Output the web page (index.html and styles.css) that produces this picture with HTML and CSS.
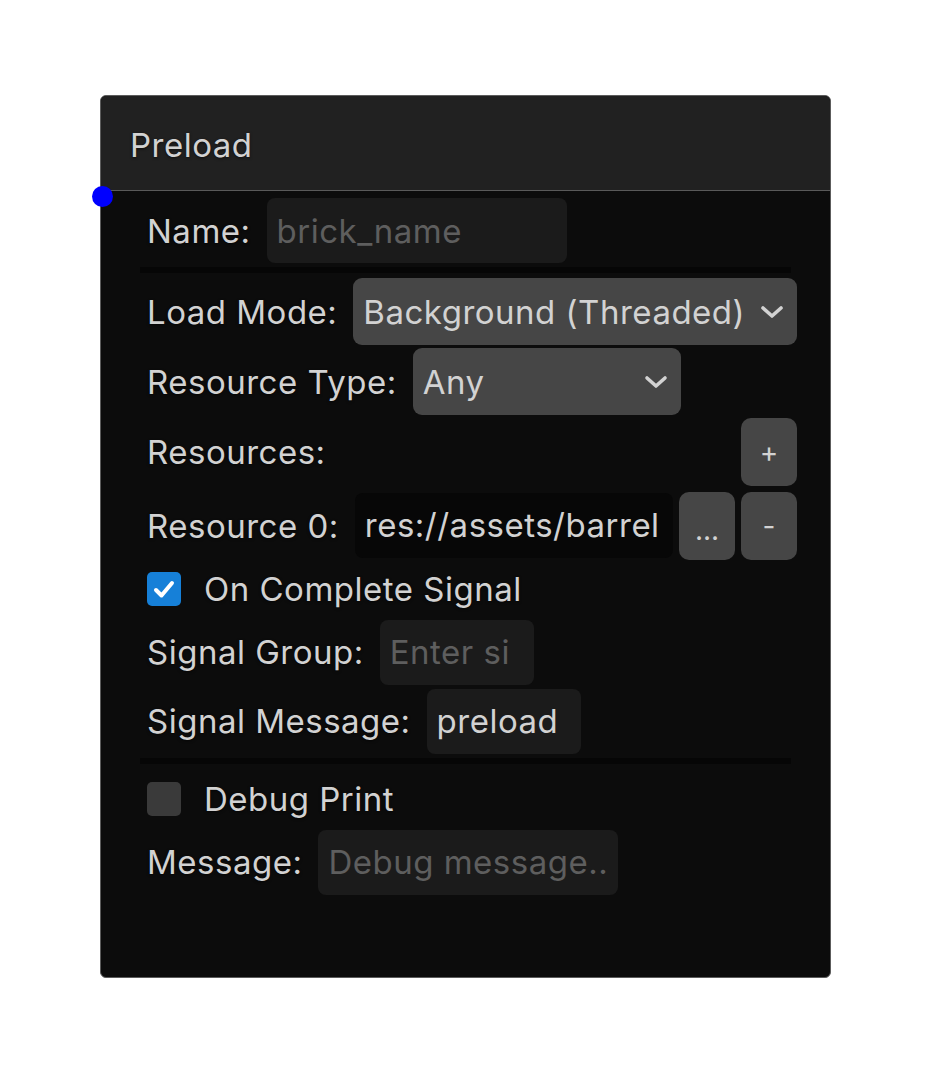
FILE: index.html
```html
<!DOCTYPE html>
<html>

<head>
    <meta charset="UTF-8">
    <title>Preload</title>
    <link rel="stylesheet" href="styles.css">
</head>

<body>
    <div class="node">
        <span class="port"></span>
        <div class="node-title">Preload</div>

        <div class="node-body">
            <div class="row row-name">
                <label for="name">Name:</label>
                <input type="text" id="name" class="field field-name" placeholder="brick_name">
            </div>

            <div class="sep"></div>

            <div class="row row-tall">
                <label>Load Mode:</label>
                <button class="dropdown dropdown-mode">
                    <span>Background (Threaded)</span>
                    <svg width="26" height="16" viewBox="0 0 26 16"><polyline points="4,4 13,12 22,4" /></svg>
                </button>
            </div>

            <div class="row row-tall">
                <label>Resource Type:</label>
                <button class="dropdown dropdown-type">
                    <span>Any</span>
                    <svg width="26" height="16" viewBox="0 0 26 16"><polyline points="4,4 13,12 22,4" /></svg>
                </button>
            </div>

            <div class="row row-tall row-resources">
                <label>Resources:</label>
                <button class="btn btn-add">+</button>
            </div>

            <div class="row row-tall">
                <label>Resource 0:</label>
                <div class="path">res://assets/barrel</div>
                <button class="btn btn-browse">...</button>
                <button class="btn">-</button>
            </div>

            <div class="row row-check">
                <span class="check checked">
                    <svg width="34" height="34" viewBox="0 0 34 34"><polyline points="9,18 14.5,23.5 25,11" /></svg>
                </span>
                <span class="check-label">On Complete Signal</span>
            </div>

            <div class="row">
                <label for="group">Signal Group:</label>
                <input type="text" id="group" class="field field-short" placeholder="Enter si">
            </div>

            <div class="row">
                <label for="msg">Signal Message:</label>
                <input type="text" id="msg" class="field field-short" value="preload">
            </div>

            <div class="sep sep-debug"></div>

            <div class="row row-check">
                <span class="check"></span>
                <span class="check-label">Debug Print</span>
            </div>

            <div class="row">
                <label for="debug">Message:</label>
                <input type="text" id="debug" class="field field-name" placeholder="Debug message..">
            </div>
        </div>
    </div>
</body>

</html>
```

FILE: styles.css
```css
* {
    box-sizing: border-box;
    margin: 0;
    padding: 0;
}

body {
    background-color: #fff;
    font-family: Inter, "Noto Sans", sans-serif;
    font-size: 33px;
    letter-spacing: 0.5px;
    color: #d2d2d2;
}

.node {
    position: relative;
    width: 731px;
    height: 883px;
    margin: 95px 0 0 100px;
    background-color: #0c0c0c;
    border: 1px solid #5c5c5c;
    border-radius: 6px;
}

.port {
    position: absolute;
    left: -9px;
    top: 90px;
    width: 21px;
    height: 21px;
    border-radius: 50%;
    background-color: #0000ff;
}

.node-title {
    height: 95px;
    line-height: 98px;
    padding-left: 29px;
    background-color: #212121;
    border-bottom: 1px solid #5a5a5a;
    border-radius: 5px 5px 0 0;
    text-shadow: 0 1px 3px rgba(0, 0, 0, 0.6);
}

.node-body {
    display: flex;
    flex-direction: column;
    gap: 3px;
    padding: 7px 33px 0 46px;
}

.row {
    display: flex;
    align-items: center;
    gap: 16px;
    height: 66px;
}

.row label,
.check-label {
    white-space: nowrap;
    text-shadow: 0 1px 3px rgba(0, 0, 0, 0.6);
}

.row-name {
    height: 65px;
}

.row-tall {
    height: 67px;
}

.row-resources {
    justify-content: space-between;
    height: 68px;
    margin-bottom: 3px;
}

.row-check {
    height: 54px;
    gap: 23px;
}

.sep {
    height: 6px;
    margin: 1px 6px 2px -7px;
    background-color: #060606;
}

.sep-debug {
    margin-bottom: 5px;
}

.field {
    height: 65px;
    padding: 0 10px;
    border: none;
    border-radius: 8px;
    background-color: #1b1b1b;
    color: #d2d2d2;
    font-family: inherit;
    font-size: 33px;
    letter-spacing: 0.5px;
    outline: none;
}

.field::placeholder {
    color: #5e5e5e;
}

.field-name {
    width: 300px;
}

.field-short {
    width: 154px;
}

.dropdown {
    display: flex;
    align-items: center;
    justify-content: space-between;
    height: 67px;
    padding: 0 12px 0 10px;
    border: none;
    border-radius: 9px;
    background-color: #464646;
    color: #d2d2d2;
    font-family: inherit;
    font-size: 33px;
    letter-spacing: 0.5px;
}

.dropdown svg polyline {
    fill: none;
    stroke: #d2d2d2;
    stroke-width: 3.6;
    stroke-linecap: round;
    stroke-linejoin: round;
}

.dropdown-mode {
    flex: 1;
}

.dropdown-type {
    width: 268px;
}

.path {
    flex: 1;
    height: 65px;
    line-height: 65px;
    padding-left: 10px;
    border-radius: 8px;
    background-color: #070707;
    white-space: nowrap;
    overflow: hidden;
}

.btn {
    width: 56px;
    height: 68px;
    border: none;
    border-radius: 10px;
    background-color: #464646;
    color: #d2d2d2;
    font-family: inherit;
    font-size: 28px;
}

.row .btn + .btn {
    margin-left: -10px;
}

.row .path + .btn {
    margin-left: -10px;
}

.btn-browse {
    padding-top: 8px;
}

.check {
    width: 34px;
    height: 34px;
    border-radius: 5px;
    background-color: #3a3a3a;
}

.check.checked {
    background-color: #1680d8;
}

.check svg polyline {
    fill: none;
    stroke: #fff;
    stroke-width: 4;
    stroke-linecap: round;
    stroke-linejoin: round;
}
```
